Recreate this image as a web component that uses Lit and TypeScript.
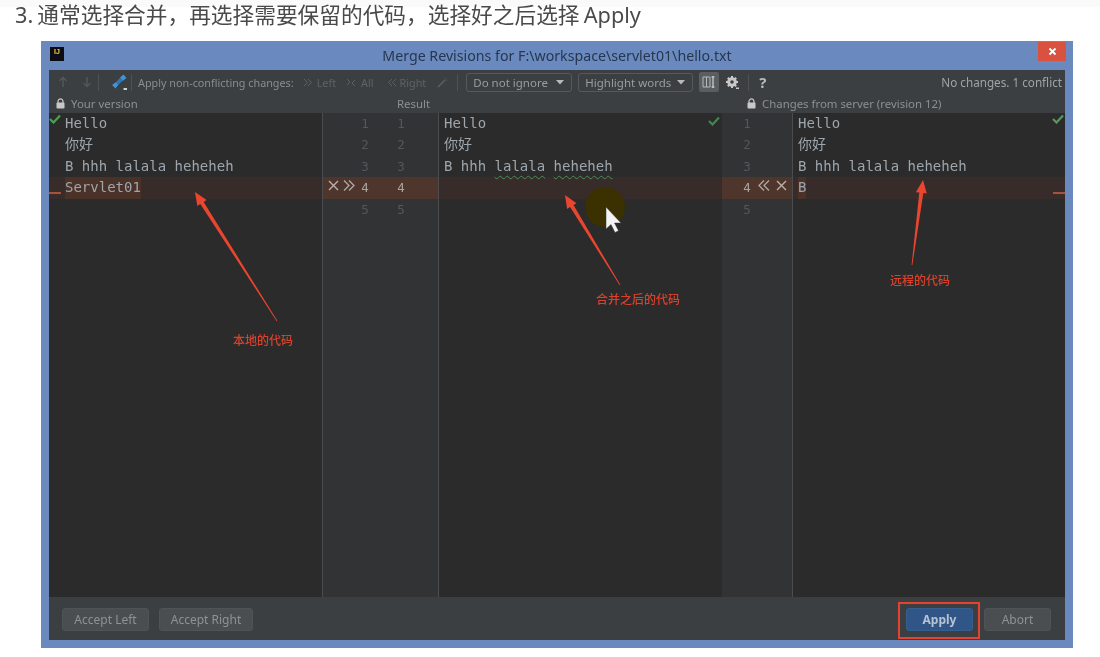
import { LitElement, html, css, svg } from "lit";
import { customElement } from "lit/decorators.js";

const lock = html`<svg class="lock" width="9" height="11" viewBox="0 0 9 11"><path d="M2 5V3.4a2.5 2.5 0 0 1 5 0V5" fill="none" stroke="#c8c8c8" stroke-width="1.2"/><rect x="0.5" y="4.6" width="8" height="6" rx="0.8" fill="#c8c8c8"/></svg>`;
const cross = html`<svg width="13" height="13" viewBox="0 0 13 13"><path d="M2 2l9 9M11 2l-9 9" stroke="#b9b2ac" stroke-width="1.4" fill="none"/></svg>`;
const dblR = html`<svg width="14" height="13" viewBox="0 0 14 13"><path d="M2 1.5l5 5-5 5M7 1.5l5 5-5 5" stroke="#b0a9a3" stroke-width="1.3" fill="none"/></svg>`;
const dblL = html`<svg width="14" height="13" viewBox="0 0 14 13"><path d="M12 1.5l-5 5 5 5M7 1.5l-5 5 5 5" stroke="#b0a9a3" stroke-width="1.3" fill="none"/></svg>`;
const smallR = html`<svg width="10" height="9" viewBox="0 0 10 9"><path d="M1 1l3.5 3.5L1 8M5 1l3.5 3.5L5 8" stroke="#5d6063" stroke-width="1" fill="none"/></svg>`;
const smallL = html`<svg width="10" height="9" viewBox="0 0 10 9"><path d="M9 1L5.5 4.5 9 8M5 1L1.5 4.5 5 8" stroke="#5d6063" stroke-width="1" fill="none"/></svg>`;
const smallX = html`<svg width="10" height="9" viewBox="0 0 10 9"><path d="M1 1l3 3-3 3M9 2L6 5l3 3" stroke="#5d6063" stroke-width="1" fill="none"/></svg>`;
const check = (c: string) => html`<svg class="check" width="12" height="10" viewBox="0 0 12 10"><path d="M1 5l3.5 3.5L11 1.5" stroke="${c}" stroke-width="2.2" fill="none"/></svg>`;
const caret = html`<svg class="caret" width="8" height="5" viewBox="0 0 8 5"><path d="M0 0h8L4 4.500z" fill="#b8b8b8"/></svg>`;

const rows1 = ["Hello", "你好", "B hhh lalala heheheh", "Servlet01", ""];
const rows3 = ["Hello", "你好", "B hhh lalala heheheh", "B", ""];

@customElement("app-root")
export class AppRoot extends LitElement {
  static styles = css`
    :host { display: block; width: 1100px; height: 657px; background: linear-gradient(#fafafa 7px, #fff 7px); position: relative; overflow: hidden;
      font-family: "Noto Sans", "Noto Sans CJK SC", sans-serif; }
    .heading { height: 41px; padding: 3px 0 0 15px; box-sizing: border-box; line-height: 24px; word-spacing: -1.5px;
      font-size: 21.7px; color: #4a4a4a; filter: blur(0.4px); white-space: nowrap; }
    .window { position: relative; margin-left: 41px; width: 1032px; height: 607px; background: #6a8abf; display: flex; flex-direction: column; box-sizing: border-box; padding: 0 8px 8px; filter: blur(0.7px); }
    .title { height: 29px; margin: 0 -8px; flex: none; position: relative; display: flex; align-items: center; justify-content: center; font-size: 14.2px; color: #27364f; }
    .logo { position: absolute; left: 9px; top: 6px; width: 14px; height: 14px; background: #0c0c14; color: #f4d24a; font: bold 7px/9px "Liberation Sans", sans-serif; text-align: center; }
    .close { position: absolute; right: 7px; top: 1px; width: 28px; height: 19px; background: #d9523f; color: #fff; display: flex; align-items: center; justify-content: center; }
    .inner { flex: 1; background: #3c3f41; display: flex; flex-direction: column; min-height: 0; }
    .toolbar { height: 24px; flex: none; display: flex; align-items: center; font-size: 10.8px; color: #8a8d8f; position: relative; }
    .toolbar > * { flex: none; }
    .sep { width: 1px; height: 17px; background: #4f5254; }
    .t-dis { color: #5f6264; }
    .dd { height: 19px; border: 1px solid #56595b; border-radius: 3px; display: flex; align-items: center; justify-content: space-between; padding: 0 7px 0 6px; box-sizing: border-box; font-size: 11.5px; color: #9a9d9f; }
    .modebtn { width: 20px; height: 20px; background: #5a5e60; border-radius: 2px; display: flex; align-items: center; justify-content: center; }
    .status { margin-left: auto; padding-right: 3px; color: #a0a3a5; font-size: 11.7px; }
    .help { color: #b8babc; font-size: 15px; font-weight: 700; }
    .header { height: 19px; flex: none; display: flex; align-items: center; font-size: 11.4px; color: #8d9092; }
    .header .a { width: 348px; padding-left: 7px; box-sizing: border-box; display: flex; gap: 6px; align-items: center; }
    .header .b { width: 350px; }
    .header .c { display: flex; gap: 6px; align-items: center; }
    .editor { flex: 1; display: grid; grid-template-columns: 273px 117px 283px 71px 1fr; min-height: 0; font: 14px/21.4px "DejaVu Sans Mono", "Noto Sans CJK SC", monospace; color: #9da6ad; background: #2b2b2b; }
    .pane { position: relative; }
    .row { height: 21.4px; white-space: pre; box-sizing: border-box; }
    .pane .row { padding-left: 5px; }
    .pane.first .row { padding-left: 16px; }
    .row.conflict { background: #382c2a; }
    .word { background: #4b3229; display: inline-block; }
    .squig { text-decoration: underline wavy #4f8a58 1px; text-underline-offset: 3.5px; }
    .gutter { background: #313335; border-left: 1px solid #4a4c4e; border-right: 1px solid #4a4c4e; color: #55585b; font-size: 12.5px; }
    .gutter .row { display: grid; align-items: center; justify-items: center; }
    .g1 .row { grid-template-columns: 16px 16px 16px 56px; padding-left: 2px; }
    .g2 { border-left: none; }
    .g2 .row { grid-template-columns: 16px 18px 16px; padding-left: 17px; }
    .gutter .row.conflict { background: #4f362d; color: #a8a29c; }
    .check { position: absolute; top: 1px; }
    .first .check { left: 0; }
    .mid .check { right: 2px; top: 3px; }
    .last .check { right: 1px; }
    .dash { position: absolute; height: 1.5px; background: #a5533a; width: 12px; top: 79px; }
    .first .dash { left: 0; }
    .last .dash { right: 0; }
    .footer { height: 43px; flex: none; display: flex; align-items: center; padding: 2px 14px 0 13px; box-sizing: border-box; gap: 10px; background: #3c3f41; }
    .btn { height: 23px; border-radius: 3px; background: #4a4e50; border: 1px solid #4f5355; box-sizing: border-box; color: #8f9294; font-size: 12px; display: flex; align-items: center; justify-content: center; }
    .btn.l { width: 87px; }
    .btn.r { width: 94px; }
    .btn.apply { width: 67px; background: #2f5686; border-color: #365e90; color: #b6c3d2; font-weight: 700; margin-left: auto; position: relative; }
    .btn.apply::after { content: ""; position: absolute; inset: -7px -8px -9px -9px; border: 2.5px solid #e5432f; }
    .btn.abort { width: 67px; margin-left: 1px; }
    .anno { position: absolute; color: #d8412c; font-size: 12px; font-weight: 500; white-space: nowrap; font-family: "Noto Sans CJK SC", sans-serif; line-height: 14px; }
    .a1 { left: 192px; top: 292px; }
    .a2 { left: 555px; top: 251px; }
    .a3 { left: 849px; top: 232px; }
    .overlay { position: absolute; left: 0; top: 0; pointer-events: none; }
  `;

  private arrow(x1: number, y1: number, x2: number, y2: number) {
    const dx = x2 - x1, dy = y2 - y1, len = Math.hypot(dx, dy);
    const ux = dx / len, uy = dy / len, nx = -uy, ny = ux;
    const bx = x2 - ux * 13, by = y2 - uy * 13;
    const p = (a: number, b: number) => `${a.toFixed(1)},${b.toFixed(1)}`;
    return svg`<polygon fill="#ea452f" points="${p(x1 + nx * 0.4, y1 + ny * 0.4)} ${p(bx + nx * 2, by + ny * 2)} ${p(bx + nx * 5.5, by + ny * 5.5)} ${p(x2, y2)} ${p(bx - nx * 5.5, by - ny * 5.5)} ${p(bx - nx * 2, by - ny * 2)} ${p(x1 - nx * 0.4, y1 - ny * 0.4)}"/>`;
  }

  private spacer(w: number) { return html`<span style="width:${w}px"></span>`; }

  render() {
    return html`
      <div class="heading">3. 通常选择合并，再选择需要保留的代码，选择好之后选择 Apply</div>
      <div class="window">
        <div class="title">
          <div class="logo">IJ</div>
          Merge Revisions for F:\\workspace\\servlet01\\hello.txt
          <div class="close"><svg width="9" height="9" viewBox="0 0 9 9"><path d="M1.5 1.5l6 6M7.5 1.5l-6 6" stroke="#fff" stroke-width="1.8"/></svg></div>
        </div>
        <div class="inner">
          <div class="toolbar">
            ${this.spacer(9)}
            <svg width="10" height="12" viewBox="0 0 10 12"><path d="M5 11V2M1.5 5L5 1.5 8.5 5" stroke="#55585a" stroke-width="1.4" fill="none"/></svg>
            ${this.spacer(14)}
            <svg width="10" height="12" viewBox="0 0 10 12"><path d="M5 1v9M1.5 7L5 10.5 8.5 7" stroke="#55585a" stroke-width="1.4" fill="none"/></svg>
            ${this.spacer(6)}
            <span class="sep"></span>
            ${this.spacer(12)}
            <svg width="17" height="17" viewBox="0 0 17 17"><path d="M1 11l4-3 2.500 2.500-3 4zM9 3.500l3.500-3 3 3.500-4 3z" fill="#3f94d8"/><path d="M5 8l4-4 2.500 3-4 3.500z" fill="#2f78b8"/><rect x="12.500" y="14" width="3.500" height="2" fill="#d0d0d0"/></svg>
            ${this.spacer(3)}
            <span class="sep"></span>
            ${this.spacer(6)}
            <span>Apply non-conflicting changes:</span>
            ${this.spacer(9)}
            ${smallR}${this.spacer(4)}<span class="t-dis">Left</span>
            ${this.spacer(10)}
            ${smallX}${this.spacer(5)}<span class="t-dis">All</span>
            ${this.spacer(13)}
            ${smallL}${this.spacer(3)}<span class="t-dis">Right</span>
            ${this.spacer(11)}
            <svg width="11" height="11" viewBox="0 0 11 11"><path d="M1 10l7-7" stroke="#5d6063" stroke-width="1.5"/><path d="M8 1v1M10 3H9" stroke="#5d6063"/></svg>
            ${this.spacer(9)}
            <span class="sep"></span>
            ${this.spacer(8)}
            <div class="dd" style="width:106px">Do not ignore ${caret}</div>
            ${this.spacer(6)}
            <div class="dd" style="width:115px">Highlight words ${caret}</div>
            ${this.spacer(6)}
            <div class="modebtn"><svg width="14" height="14" viewBox="0 0 14 14"><path d="M1 2h7v10H1zM4.5 2v10" stroke="#b5b8ba" fill="none"/><path d="M11 1v12M9.5 2h3M9.5 12h3" stroke="#d0d2d4" stroke-width="1.2" fill="none"/></svg></div>
            ${this.spacer(6)}
            <svg width="15" height="15" viewBox="0 0 15 15"><circle cx="7" cy="7" r="3.6" fill="none" stroke="#c8c8c8" stroke-width="2.4"/><path d="M7 1v12M1 7h12M2.800 2.800l8.400 8.400M11.200 2.800l-8.400 8.400" stroke="#c8c8c8" stroke-width="2"/><circle cx="7" cy="7" r="1.8" fill="#3c3f41"/><rect x="11" y="12.500" width="3" height="1.500" fill="#c8c8c8"/></svg>
            ${this.spacer(8)}
            <span class="sep"></span>
            ${this.spacer(10)}
            <span class="help">?</span>
            <span class="status">No changes. 1 conflict</span>
          </div>
          <div class="header">
            <div class="a">${lock}<span>Your version</span></div>
            <div class="b">Result</div>
            <div class="c">${lock}<span>Changes from server (revision 12)</span></div>
          </div>
          <div class="editor">
            <div class="pane first">
              ${check("#4f9e57")}
              <span class="dash"></span>
              ${rows1.map((r, i) => html`<div class="row ${i === 3 ? "conflict" : ""}">${i === 3 ? html`<span class="word">${r}</span>` : r}</div>`)}
            </div>
            <div class="gutter g1">
              ${[1, 2, 3, 4, 5].map((n) => html`<div class="row ${n === 4 ? "conflict" : ""}">
                <span>${n === 4 ? cross : ""}</span><span>${n === 4 ? dblR : ""}</span><span>${n}</span><span>${n}</span></div>`)}
            </div>
            <div class="pane mid">
              ${check("#3d8a48")}
              <div class="row">Hello</div>
              <div class="row">你好</div>
              <div class="row">B hhh <span class="squig">lalala</span> <span class="squig">heheheh</span></div>
              <div class="row conflict"></div>
            </div>
            <div class="gutter g2">
              ${[1, 2, 3, 4, 5].map((n) => html`<div class="row ${n === 4 ? "conflict" : ""}">
                <span>${n}</span><span>${n === 4 ? dblL : ""}</span><span>${n === 4 ? cross : ""}</span></div>`)}
            </div>
            <div class="pane last">
              ${check("#4f9e57")}
              <span class="dash"></span>
              ${rows3.map((r, i) => html`<div class="row ${i === 3 ? "conflict" : ""}">${i === 3 ? html`<span class="word">${r}</span>` : r}</div>`)}
            </div>
          </div>
          <div class="footer">
            <div class="btn l">Accept Left</div>
            <div class="btn r">Accept Right</div>
            <div class="btn apply">Apply</div>
            <div class="btn abort">Abort</div>
          </div>
        </div>
        <svg class="overlay" width="1032" height="607" viewBox="41 41 1032 607">
          <circle cx="605" cy="207" r="20" fill="#3a3000"/>
          ${this.arrow(277, 321, 195, 192)}
          ${this.arrow(620, 285, 565, 195)}
          ${this.arrow(912, 265, 923, 180)}
          <path d="M606 207v22l5-4.5 4 8 3.500-1.800-4-7.700h6.500z" fill="#f4f4f4" stroke="#3a3a3a" stroke-width="0.5"/>
        </svg>
        <span class="anno a1">本地的代码</span>
        <span class="anno a2">合并之后的代码</span>
        <span class="anno a3">远程的代码</span>
      </div>
    `;
  }
}
